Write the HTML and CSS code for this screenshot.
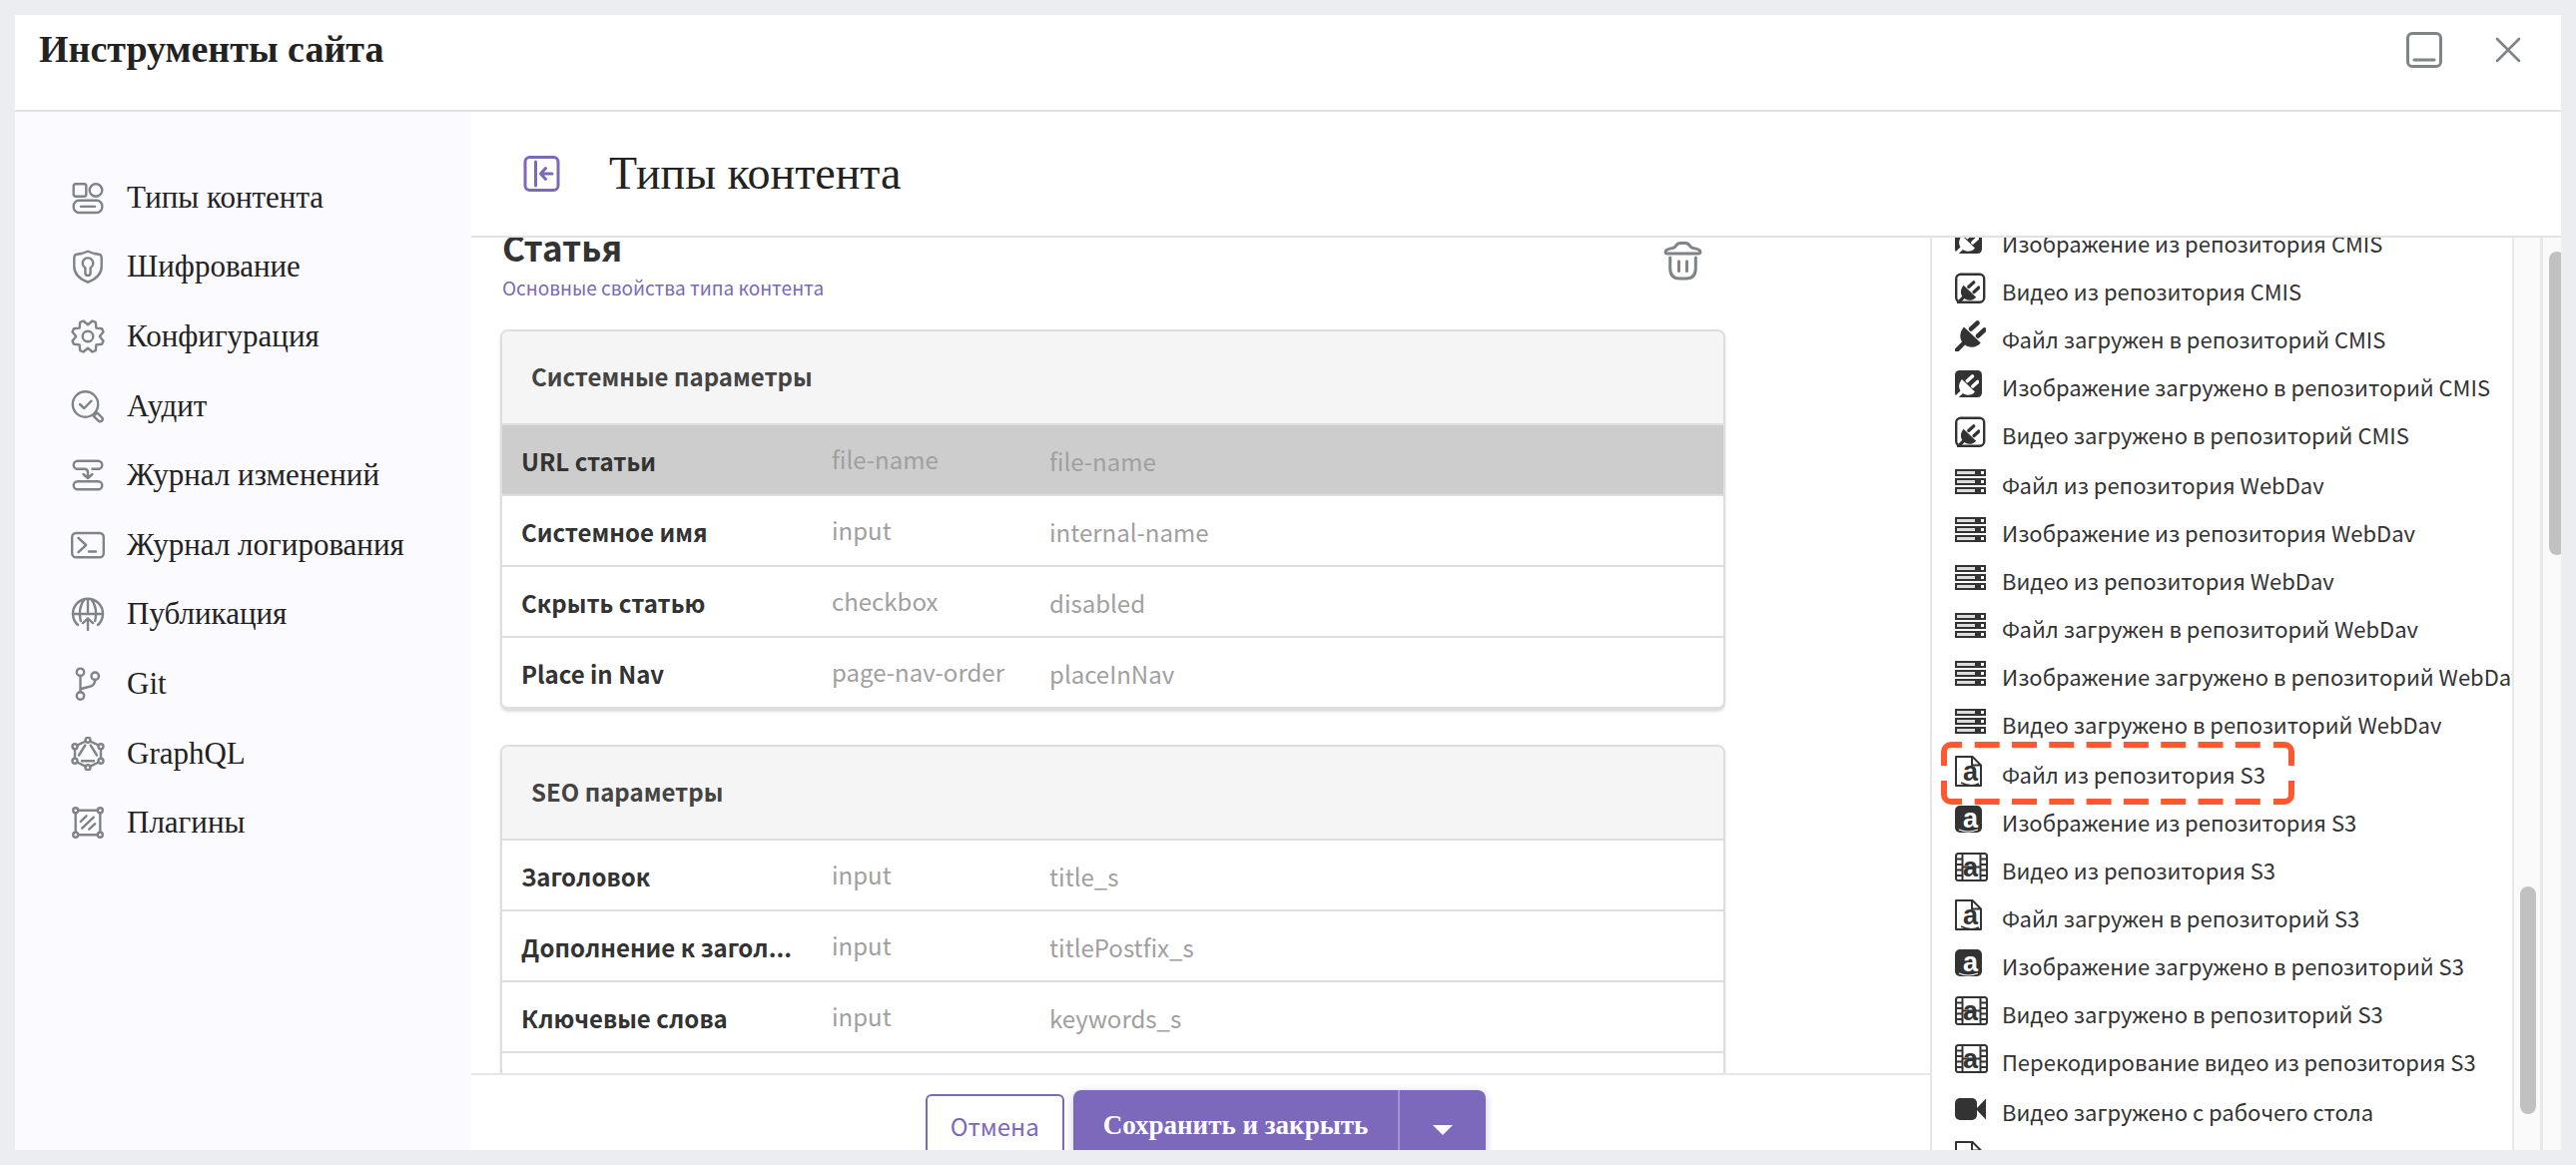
FILE: index.html
```html
<!DOCTYPE html>
<html lang="ru">
<head>
<meta charset="utf-8">
<title>Инструменты сайта</title>
<link rel="stylesheet" href="styles.css">
</head>
<body>
<svg class="sprite" aria-hidden="true">
  <symbol id="plug" viewBox="0 0 31 31">
    <path d="M9 6.5 25.8 22.5C22 27.5 14 28 9.5 24 4 19.5 4 12 9 6.5Z" fill="currentColor"/>
    <path d="M2 29.5 9 22.5M16 8.5 22.5 2.5M23 15.500 29.500 9.500" stroke="currentColor" stroke-width="4.500" stroke-linecap="round" fill="none"/>
  </symbol>
  <symbol id="i-plug" viewBox="0 0 33 31"><use href="#plug" width="31" height="31"/></symbol>
  <symbol id="i-plug-image" viewBox="0 0 33 31">
    <rect y="2" width="27" height="27" rx="4.500" fill="currentColor"/>
    <use class="knockout" href="#plug" x="0" y="6" width="24" height="24"/>
  </symbol>
  <symbol id="i-plug-video" viewBox="0 0 33 31">
    <rect x="1.200" y="1.700" width="28" height="28" rx="4.500" fill="none" stroke="currentColor" stroke-width="2.400"/>
    <use href="#plug" x="2" y="8" width="23" height="23"/>
  </symbol>
  <symbol id="i-server" viewBox="0 0 33 31">
    <path d="M0 3h31v7H0zM0 12h31v7H0zM0 21h31v7H0z" fill="currentColor"/>
    <path d="M2 5h18v3H2zM2 14h18v3H2zM2 23h18v3H2z" fill="#ddd"/>
    <path d="M26 5h3v3h-3zM26 14h3v3h-3zM26 23h3v3h-3z" fill="#fff"/>
  </symbol>
  <symbol id="i-s3-file" viewBox="0 0 33 31">
    <path d="M1 1h16.500L26 9.500V30H1zM17 1v8.500h9" fill="none" stroke="currentColor" stroke-width="2" stroke-linejoin="round"/>
    <path d="M6 27q10 5 18 1" fill="none" stroke="currentColor" stroke-width="1.500"/>
    <text class="glyph" x="8" y="25">a</text>
  </symbol>
  <symbol id="i-s3-image" viewBox="0 0 33 31">
    <rect y="2" width="27" height="27" rx="5" fill="currentColor"/>
    <text class="glyph glyph-light" x="8" y="24">a</text>
    <path d="M4 26q9 4 19 0" fill="none" stroke="#fff" stroke-width="1.200"/>
  </symbol>
  <symbol id="i-s3-video" viewBox="0 0 33 31">
    <rect x="1" y="2" width="31" height="27" rx="2.500" fill="none" stroke="currentColor" stroke-width="2"/>
    <path d="M7.500 2v27M25.500 2v27M1 7.500h6.500M1 13h6.500M1 18.500h6.500M1 24h6.500M25.500 7.500H32M25.500 13H32M25.500 18.500H32M25.500 24H32M7.500 15.500h18" fill="none" stroke="currentColor" stroke-width="2"/>
    <text class="glyph" x="8" y="25">a</text>
  </symbol>
  <symbol id="i-camera" viewBox="0 0 33 31">
    <rect y="5" width="22" height="22" rx="5" fill="currentColor"/>
    <path d="M21 16 31 5.500v21z" fill="currentColor"/>
  </symbol>
  <symbol id="i-file" viewBox="0 0 33 31">
    <path d="M1 1h16.500L26 9.500V30H1zM17 1v8.500h9" fill="none" stroke="currentColor" stroke-width="2" stroke-linejoin="round"/>
  </symbol>
</svg>

<div class="window">
  <header class="titlebar">
    <h1>Инструменты сайта</h1>
    <div class="titlebar-actions">
      <button class="icon-button" type="button" aria-label="Свернуть">
        <svg width="38" height="38" viewBox="0 0 38 38"><rect x="2.500" y="2.500" width="33" height="33" rx="4.500" stroke-width="3"/><path d="M9 29h20" stroke-width="3"/></svg>
      </button>
      <button class="icon-button" type="button" aria-label="Закрыть">
        <svg width="38" height="38" viewBox="0 0 38 38"><path d="M8 8 30 30M30 8 8 30" stroke-width="2.600"/></svg>
      </button>
    </div>
  </header>

  <div class="body">
    <nav class="sidebar" aria-label="Инструменты">
      <div class="nav-list">
      <a href="#types"><svg viewBox="0 0 34 34"><rect x="2.700" y="3.200" width="12.600" height="12.600" rx="2"/><circle cx="25" cy="9.500" r="6.300"/><rect x="2.700" y="19.800" width="28.600" height="12.200" rx="5.500"/><path d="M10 25.900h14"/></svg>Типы контента</a>
      <a href="#encryption"><svg viewBox="0 0 34 34"><path d="M17 1.800C13 3.800 9.500 4.300 6 4.800q-2.700.4-2.700 3V17c0 8 5.500 12.500 13.700 15.700C25.200 29.500 30.700 25 30.700 17V7.800q0-2.600-2.700-3c-3.500-.5-7-1-11-3z"/><path d="M14.400 18.300a5.300 5.300 0 1 1 5.200 0v5.200q0 2.500-2.600 2.500t-2.600-2.500z"/></svg>Шифрование</a>
      <a href="#config"><svg viewBox="0 0 34 34"><path d="M17 5.200 21.500 1.500 24.800 2.900 25.400 8.600 31.100 9.200 32.500 12.500 28.800 17 32.500 21.500 31.100 24.800 25.400 25.400 24.800 31.100 21.500 32.500 17 28.800 12.500 32.500 9.200 31.100 8.600 25.400 2.900 24.800 1.500 21.500 5.200 17 1.500 12.500 2.900 9.200 8.600 8.600 9.200 2.900 12.500 1.500z"/><circle cx="17" cy="17" r="5.300"/></svg>Конфигурация</a>
      <a href="#audit"><svg viewBox="0 0 34 34"><circle cx="14.500" cy="15" r="12.700"/><path d="M9 15l4.300 4L20.500 11.700M22.800 26.800 26.200 23.400 31 28.200A2.400 2.400 0 0 1 27.600 31.600z"/></svg>Аудит</a>
      <a href="#changes"><svg viewBox="0 0 34 34"><path d="M21.500 10.700H27.300a4 4 0 0 0 0-8H6.700a4 4 0 0 0 0 8H13.500q3.500 0 3.500 3.500V20M12.500 16 17 20 21.500 16"/><rect x="2.700" y="23.200" width="28.600" height="8" rx="4"/></svg>Журнал изменений</a>
      <a href="#logs"><svg viewBox="0 0 34 34"><rect x="1.200" y="5" width="31.600" height="24.200" rx="4"/><path d="M7.500 9.800 15.200 17 7.500 24.200M18 23.500h7"/></svg>Журнал логирования</a>
      <a href="#publish"><svg viewBox="0 0 34 34"><path d="M7 28A15 15 0 1 1 27 28M2 17h30M17 2v15M13.500 2.500C8.500 9 8 16 9.800 24M20.500 2.500C25.500 9 26 16 24.200 24M17 33V21.500M12 26.200 17 21.500 22 26.200"/></svg>Публикация</a>
      <a href="#git"><svg viewBox="0 0 34 34"><circle cx="9.500" cy="5.300" r="3.700"/><circle cx="24.200" cy="9.200" r="3.700"/><circle cx="9.500" cy="29" r="3.700"/><path d="M9.500 9v16.300M24.200 13c-.5 9-9 6-14.700 9.500"/></svg>Git</a>
      <a href="#graphql"><svg viewBox="0 0 34 34"><circle cx="17" cy="3.300" r="2.500"/><circle cx="30" cy="9.700" r="2.500"/><circle cx="30" cy="24.300" r="2.500"/><circle cx="17" cy="30.800" r="2.500"/><circle cx="4" cy="24.300" r="2.500"/><circle cx="4" cy="9.700" r="2.500"/><path d="M14.700 4.500 6.200 8.600M19.300 4.500 27.800 8.600M4 12.300v9.500M30 12.300v9.500M6.200 25.500l8.500 4.200M27.800 25.500l-8.500 4.200M14.300 8.500 8 18.500M19.700 8.500 26 18.500M11 24.300h12"/></svg>GraphQL</a>
      <a href="#plugins"><svg viewBox="0 0 34 34"><circle cx="4.700" cy="4.700" r="2.500"/><circle cx="29.300" cy="4.700" r="2.500"/><circle cx="4.700" cy="29.300" r="2.500"/><circle cx="29.300" cy="29.300" r="2.500"/><path d="M7.200 4.700h19.600M7.200 29.300h19.600M4.700 7.200v19.600M29.300 7.200v19.600M9.700 16l5.800-5.700M11.200 22.700 22.800 11.700M18.200 23.700l6-5.500"/></svg>Плагины</a>
      </div>
    </nav>

    <section class="workspace">
      <header class="page-header">
        <button class="icon-button collapse" type="button" aria-label="Скрыть меню">
          <svg width="38" height="38" viewBox="0 0 38 38"><rect x="2" y="2.500" width="33" height="33" rx="4.500"/><path d="M12.500 7v24M29 19H18M22.500 13.500 17.500 19 22.500 24.500"/></svg>
        </button>
        <h2>Типы контента</h2>
      </header>

      <div class="columns">
        <main class="editor">
          <div class="canvas">
            <div class="type-head">
              <div>
                <h3>Статья</h3>
                <a href="#properties">Основные свойства типа контента</a>
              </div>
              <button class="icon-button trash" type="button" aria-label="Удалить">
                <svg width="40" height="40" viewBox="0 0 40 40"><path d="M4 13C1.500 13 1.500 10.500 3.500 9.200 6 7.800 9 8 11 6.800 13 5.500 13 2.500 17 2.500H22C26 2.500 26 5.500 28 6.800 30 8 33 7.800 35.500 9.200 37.500 10.500 37.500 13 35 13ZM6.700 17V27.500Q6.700 38 16 38H23Q32.300 38 32.300 27.500V17M15.500 20.700V30.500M23.500 20.700V30.500"/></svg>
              </button>
            </div>

            <table class="card">
              <colgroup><col class="col-title"><col class="col-kind"><col></colgroup>
              <thead><tr><th colspan="3" scope="colgroup">Системные параметры</th></tr></thead>
              <tbody>
                <tr class="selected"><th scope="row">URL статьи</th><td class="kind">file-name</td><td>file-name</td></tr>
                <tr><th scope="row">Системное имя</th><td class="kind">input</td><td>internal-name</td></tr>
                <tr><th scope="row">Скрыть статью</th><td class="kind">checkbox</td><td>disabled</td></tr>
                <tr><th scope="row">Place in Nav</th><td class="kind">page-nav-order</td><td>placeInNav</td></tr>
              </tbody>
            </table>

            <table class="card">
              <colgroup><col class="col-title"><col class="col-kind"><col></colgroup>
              <thead><tr><th colspan="3" scope="colgroup">SEO параметры</th></tr></thead>
              <tbody>
                <tr><th scope="row">Заголовок</th><td class="kind">input</td><td>title_s</td></tr>
                <tr><th scope="row">Дополнение к загол...</th><td class="kind">input</td><td>titlePostfix_s</td></tr>
                <tr><th scope="row">Ключевые слова</th><td class="kind">input</td><td>keywords_s</td></tr>
                <tr><th scope="row"></th><td class="kind"></td><td></td></tr>
              </tbody>
            </table>
          </div>

          <footer class="actions">
            <button class="cancel" type="button">Отмена</button>
            <div class="split">
              <button class="save" type="button">Сохранить и закрыть</button>
              <button class="more" type="button" aria-label="Другие действия"><svg width="20" height="10" viewBox="0 0 20 10"><path d="M0 0h20L10 10z" fill="#fff"/></svg></button>
            </div>
          </footer>
        </main>

        <aside class="sources">
          <div class="source-list">
            <ul>
              <li><svg><use href="#i-plug-image"/></svg>Изображение из репозитория CMIS</li>
              <li><svg><use href="#i-plug-video"/></svg>Видео из репозитория CMIS</li>
              <li><svg><use href="#i-plug"/></svg>Файл загружен в репозиторий CMIS</li>
              <li><svg><use href="#i-plug-image"/></svg>Изображение загружено в репозиторий CMIS</li>
              <li><svg><use href="#i-plug-video"/></svg>Видео загружено в репозиторий CMIS</li>
            </ul>
            <ul>
              <li><svg><use href="#i-server"/></svg>Файл из репозитория WebDav</li>
              <li><svg><use href="#i-server"/></svg>Изображение из репозитория WebDav</li>
              <li><svg><use href="#i-server"/></svg>Видео из репозитория WebDav</li>
              <li><svg><use href="#i-server"/></svg>Файл загружен в репозиторий WebDav</li>
              <li><svg><use href="#i-server"/></svg>Изображение загружено в репозиторий WebDav</li>
              <li><svg><use href="#i-server"/></svg>Видео загружено в репозиторий WebDav</li>
            </ul>
            <ul>
              <li class="marked"><svg><use href="#i-s3-file"/></svg>Файл из репозитория S3
                <svg class="marker" viewBox="0 0 354 63" aria-hidden="true"><path d="M3 24V10A7 7 0 0 1 10 3H21M333 3H344A7 7 0 0 1 351 10V24M351 39V53A7 7 0 0 1 344 60H333M21 60H10A7 7 0 0 1 3 53V39"/><path d="M33.700 3H321M33.700 60H321" stroke-dasharray="25 12.300"/></svg>
              </li>
              <li><svg><use href="#i-s3-image"/></svg>Изображение из репозитория S3</li>
              <li><svg><use href="#i-s3-video"/></svg>Видео из репозитория S3</li>
              <li><svg><use href="#i-s3-file"/></svg>Файл загружен в репозиторий S3</li>
              <li><svg><use href="#i-s3-image"/></svg>Изображение загружено в репозиторий S3</li>
              <li><svg><use href="#i-s3-video"/></svg>Видео загружено в репозиторий S3</li>
              <li><svg><use href="#i-s3-video"/></svg>Перекодирование видео из репозитория S3</li>
            </ul>
            <ul>
              <li><svg><use href="#i-camera"/></svg>Видео загружено с рабочего стола</li>
              <li><svg><use href="#i-file"/></svg></li>
            </ul>
          </div>
          <div class="track track-inner"><div class="thumb"></div></div>
        </aside>
        <div class="track track-outer"><div class="thumb"></div></div>
      </div>
    </section>
  </div>
</div>
</body>
</html>
```
FILE: styles.css
```css
* { box-sizing: border-box; }

html, body { height: 100%; }

body {
  margin: 0;
  padding: 15px;
  background: #ecedf1;
  color: #333;
  font-family: "Noto Sans CJK SC", "Noto Sans", sans-serif;
  font-size: 22px;
}

h1, h2, h3, ul { margin: 0; padding: 0; }
ul { list-style: none; }
a { text-decoration: none; }
button { font: inherit; cursor: pointer; }
.sprite { display: none; }

.window {
  height: 100%;
  display: flex;
  flex-direction: column;
  overflow: hidden;
  background: #fff;
}

.icon-button {
  display: flex;
  padding: 0;
  border: 0;
  background: none;
  color: #7f8487;
}
.icon-button svg, .sidebar svg {
  fill: none;
  stroke: currentColor;
  stroke-linecap: round;
  stroke-linejoin: round;
}

/* Title bar */
.titlebar {
  flex: none;
  display: flex;
  justify-content: space-between;
  height: 97px;
  padding: 12px 34px 0 24px;
  border-bottom: 2px solid #e2e2e2;
}
.titlebar h1 {
  color: #222;
  font: bold 38px/44px "Liberation Serif", serif;
}
.titlebar-actions { display: flex; gap: 46px; padding-top: 4px; }

.body { flex: 1; min-height: 0; display: flex; }

/* Sidebar */
.sidebar {
  flex: none;
  width: 457px;
  padding: 51px 0 0 56px;
  background: #fbfaff;
  font: 31px/40px "Liberation Serif", serif;
}
.nav-list {
  display: grid;
  grid-auto-rows: 1fr;
  min-height: 696px;
}
.nav-list a {
  display: flex;
  align-items: center;
  gap: 22px;
  color: #222;
}
.sidebar svg { width: 34px; height: 34px; color: #7f8487; stroke-width: 2.400; }

/* Page header */
.workspace { flex: 1; min-width: 0; display: flex; flex-direction: column; }
.page-header {
  flex: none;
  display: flex;
  align-items: center;
  gap: 48px;
  height: 126px;
  padding-left: 52px;
  border-bottom: 2px solid #e2e2e2;
}
.page-header h2 {
  color: #222;
  font: 46px/60px "Liberation Serif", serif;
}
.collapse { color: #7c69bc; }
.page-header .collapse svg { stroke-width: 3; }

.columns { flex: 1; min-height: 0; display: flex; }
.editor { flex: 1; min-width: 0; display: flex; flex-direction: column; }

/* Content type canvas, scrolled down a little */
.canvas { flex: 1; min-height: 0; overflow: hidden; padding: 0 29px; }
.type-head {
  display: flex;
  justify-content: space-between;
  width: calc(84% + 48px);
  padding: 0 22px 0 2px;
  margin: -14px 0 24px;
}
.type-head h3 { font-size: 35px; line-height: 46px; font-weight: 700; }
.type-head a { display: block; color: #7c69bc; font-size: 19px; line-height: 36px; }
.trash { align-self: flex-start; margin-top: 17px; }
.trash svg { stroke-width: 3; }

.card {
  width: calc(84% + 48px);
  table-layout: fixed;
  border: 2px solid #dedede;
  border-bottom-width: 4px;
  border-radius: 8px;
  border-spacing: 0;
  overflow: hidden;
  margin-bottom: 34px;
  font-size: 24px;
  line-height: 30px;
  box-shadow: 0 1px 3px rgba(0, 0, 0, 0.12);
}
.col-title { width: 310px; }
.col-kind { width: 219px; }
.card th, .card td {
  height: 71px;
  padding: 2px 0 0 19px;
  text-align: left;
  white-space: nowrap;
  border-top: 2px solid #dedede;
}
.card td { color: #a0a0a0; }
.card .kind { padding: 0 0 2px 20px; }
.card thead th {
  height: 92px;
  padding: 0 0 2px 29px;
  border-top: 0;
  background: #f5f5f5;
  color: #444;
}
.card .selected { background: #cdcdcd; }

/* Form actions */
.actions {
  flex: none;
  display: flex;
  justify-content: center;
  gap: 9px;
  height: 77px;
  padding: 15px 0 0 10px;
  overflow: hidden;
  border-top: 2px solid #e6e6e6;
}
.cancel {
  height: 62px;
  margin-top: 4px;
  padding: 0 23px;
  border: 2px solid #7c69bc;
  border-radius: 6px;
  background: #fff;
  color: #7c69bc;
  font-size: 24px;
}
.split {
  display: flex;
  height: 70px;
  border-radius: 8px;
  box-shadow: 0 2px 10px rgba(0, 0, 0, 0.2);
}
.split button { border: 0; background: #7c69bc; color: #fff; }
.split .save {
  padding: 0 30px;
  border-right: 2px solid #a193d6;
  border-radius: 8px 0 0 8px;
  font: bold 27px/70px "Liberation Serif", serif;
}
.split .more { width: 86px; padding: 0; border-radius: 0 8px 8px 0; }

/* Data sources */
.sources {
  flex: none;
  display: flex;
  width: 611px;
  border-left: 2px solid #e6e6e6;
}
.source-list {
  flex: 1;
  min-width: 0;
  overflow: hidden;
  padding-left: 23px;
}
.source-list ul { margin-bottom: 2px; }
.source-list ul:first-child { margin-top: -19px; }
.source-list li {
  display: flex;
  align-items: center;
  gap: 14px;
  height: 48px;
  line-height: 48px;
  white-space: nowrap;
}
.source-list li > svg { flex: none; width: 33px; height: 31px; margin-bottom: 6px; }
.glyph { font: bold 27px "Liberation Sans", sans-serif; fill: currentColor; }
.glyph-light { fill: #fff; }
.knockout { color: #fff; }

.marked { position: relative; }
.source-list .marked .marker {
  position: absolute;
  left: -14px;
  top: -8px;
  width: 354px;
  height: 63px;
  fill: none;
  stroke: #ff5730;
  stroke-width: 6;
}

/* Scroll tracks */
.track { flex: none; overflow: hidden; background: #fafafa; }
.track .thumb { width: 16px; border-radius: 8px; background: #c1c1c1; }
.track-inner { width: 28px; padding: 650px 0 0 6px; border-left: 2px solid #e8e8e8; }
.track-inner .thumb { height: 228px; }
.track-outer { width: 21px; padding: 14px 0 0 6px; border-left: 3px solid #e8e8e8; }
.track-outer .thumb { height: 304px; }
```
